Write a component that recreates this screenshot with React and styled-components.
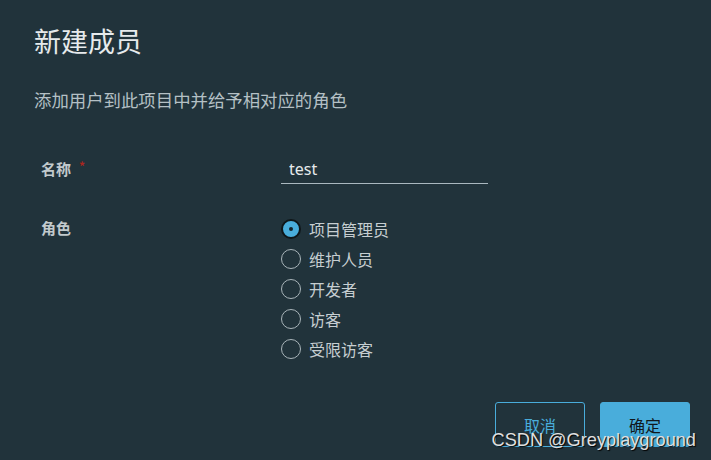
import React, { useState } from 'react'
import styled, { createGlobalStyle } from 'styled-components'

const GlobalStyle = createGlobalStyle`
  html, body {
    margin: 0;
    padding: 0;
    background: #21333b;
  }
  body {
    font-family: "Noto Sans CJK SC", "Noto Sans", sans-serif;
  }
`

const Modal = styled.div`
  position: relative;
  width: 711px;
  height: 460px;
  box-sizing: border-box;
  padding: 22px 21px 0 34px;
  background: #21333b;
  overflow: hidden;
`

const Title = styled.h1`
  margin: 0;
  font-size: 27px;
  font-weight: 400;
  line-height: 38px;
  color: #e6eaec;
`

const Subtitle = styled.p`
  margin: 28px 0 0;
  font-size: 17.4px;
  line-height: 24px;
  color: #b4c0c5;
`

const Form = styled.div`
  margin-top: 42px;
  padding-left: 7px;
  display: flex;
  flex-direction: column;
  gap: 32px;
`

const Row = styled.div`
  display: grid;
  grid-template-columns: 240px 207px;
  align-items: ${p => (p.$top ? 'start' : 'center')};
`

const Label = styled.div`
  font-size: 15px;
  font-weight: 700;
  color: #c2cacd;
  line-height: 24px;
  display: flex;
  align-items: flex-start;
  gap: 8px;
`

const Required = styled.span`
  color: #a8261f;
  font-size: 12px;
  line-height: 18px;
`

const Input = styled.input`
  width: 100%;
  box-sizing: border-box;
  height: 30px;
  padding: 0 8px;
  border: 0;
  border-bottom: 1px solid #aab8bf;
  background: transparent;
  color: #e6eaec;
  font-family: "Noto Sans", sans-serif;
  font-size: 16px;
  outline: none;
`

const RadioList = styled.div`
  display: flex;
  flex-direction: column;
  gap: 10px;
  margin-top: 3px;
`

const Option = styled.label`
  display: flex;
  align-items: center;
  gap: 8px;
  height: 20px;
  font-size: 16px;
  color: #c6ced1;
  cursor: pointer;
`

const Dot = styled.span`
  box-sizing: border-box;
  width: 20px;
  height: 20px;
  border-radius: 50%;
  border: ${p => (p.$on ? '2px solid #0f1619' : '1px solid #a9b5ba')};
  background: ${p => (p.$on ? '#49addb' : 'transparent')};
  display: flex;
  align-items: center;
  justify-content: center;
  &::after {
    content: '';
    width: 4px;
    height: 4px;
    border-radius: 50%;
    background: #14232a;
    display: ${p => (p.$on ? 'block' : 'none')};
  }
`

const Footer = styled.div`
  margin-top: 43px;
  display: flex;
  justify-content: flex-end;
  gap: 15px;
`

const Button = styled.button`
  width: 90px;
  height: 45px;
  box-sizing: border-box;
  border-radius: 3px;
  font-family: "Noto Sans CJK SC", sans-serif;
  font-size: 16px;
  cursor: pointer;
  border: 1px solid #49addb;
  background: ${p => (p.$primary ? '#49addb' : 'transparent')};
  color: ${p => (p.$primary ? '#10181c' : '#49addb')};
`

const Watermark = styled.div`
  position: absolute;
  right: 15px;
  bottom: 9px;
  font-family: "Liberation Sans", Arial, sans-serif;
  font-size: 18.2px;
  color: #e0e0e0;
  text-shadow: 1px 1px 1px #000;
  pointer-events: none;
`

const roles = ['项目管理员', '维护人员', '开发者', '访客', '受限访客']

export default function App() {
  const [role, setRole] = useState(0)
  return (
    <>
      <GlobalStyle />
      <Modal>
        <Title>新建成员</Title>
        <Subtitle>添加用户到此项目中并给予相对应的角色</Subtitle>
        <Form>
          <Row>
            <Label>名称<Required>*</Required></Label>
            <Input defaultValue="test" />
          </Row>
          <Row $top>
            <Label>角色</Label>
            <RadioList>
              {roles.map((r, i) => (
                <Option key={r} onClick={() => setRole(i)}>
                  <Dot $on={role === i} />
                  {r}
                </Option>
              ))}
            </RadioList>
          </Row>
        </Form>
        <Footer>
          <Button>取消</Button>
          <Button $primary>确定</Button>
        </Footer>
        <Watermark>CSDN @Greyplayground</Watermark>
      </Modal>
    </>
  )
}
